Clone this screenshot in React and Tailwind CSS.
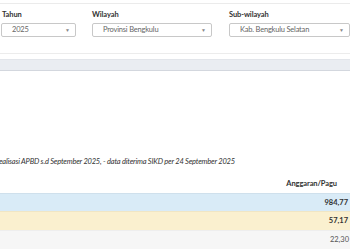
export default function App() {
  const font = { fontFamily: "Lato, 'Open Sans', sans-serif" };
  const Select = ({ w, text }) => (
    <div className={`h-[14px] ${w} border border-[#c8c8c8] rounded-[2px] bg-white flex items-center justify-between pl-[10px] pr-[5px]`}>
      <span className="text-[7.5px] tracking-[-0.2px] text-[#666] leading-none">{text}</span>
      <span className="text-[5px] text-[#888] leading-none">▼</span>
    </div>
  );
  return (
    <div className="w-[350px] h-[250px] bg-white overflow-hidden" style={font}>
      <div className="h-[3px]" />
      <div className="border-t border-[#ebebeb] h-[50px]">
        <div className="flex pt-[5px]">
          <div className="w-[76px] ml-[1px]">
            <div className="text-[7.5px] tracking-[-0.1px] font-bold text-[#333] leading-[12px] h-[14px] pl-[1px]">Tahun</div>
            <Select w="w-[75px]" text="2025" />
          </div>
          <div className="w-[120px] ml-[15px]">
            <div className="text-[7.5px] tracking-[-0.1px] font-bold text-[#333] leading-[12px] h-[14px]">Wilayah</div>
            <Select w="w-[120px]" text="Provinsi Bengkulu" />
          </div>
          <div className="w-[121px] ml-[17px]">
            <div className="text-[7.5px] tracking-[-0.1px] font-bold text-[#333] leading-[12px] h-[14px]">Sub-wilayah</div>
            <Select w="w-[121px]" text="Kab. Bengkulu Selatan" />
          </div>
        </div>
      </div>
      <div className="border-t border-[#ececec] h-[6px]" />
      <div className="h-[12px] bg-[#eaedf2] border-t border-[#e2e5ea] border-b border-b-[#d3d7de]" />
      <div className="h-[84px]" />
      <div className="h-[13px] whitespace-nowrap ml-[-5px] text-[7.5px] tracking-[-0.2px] italic text-[#333] leading-[13px]">
        Realisasi APBD s.d September 2025, - data diterima SIKD per 24 September 2025
      </div>
      <div className="h-[6px]" />
      <div className="h-[19px] flex justify-end items-center pr-[13px] text-[7.5px] tracking-[-0.1px] font-bold text-[#333]">
        Anggaran/Pagu
      </div>
      <div className="h-[18px] bg-[#d9ebf7] border-t border-[#cfe0ec] flex justify-end items-center pr-[2px] text-[7.5px] font-bold text-[#333]">
        984,77
      </div>
      <div className="h-[19px] bg-[#faf0cf] border-t border-[#f0e6c4] flex justify-end items-center pr-[2px] text-[7.5px] font-bold text-[#333]">
        57,17
      </div>
      <div className="h-[19px] bg-[#f6f6f6] border-t border-[#eeeeee] flex justify-end items-center pr-[1px] text-[7.5px] text-[#555]">
        22,30
      </div>
    </div>
  );
}
